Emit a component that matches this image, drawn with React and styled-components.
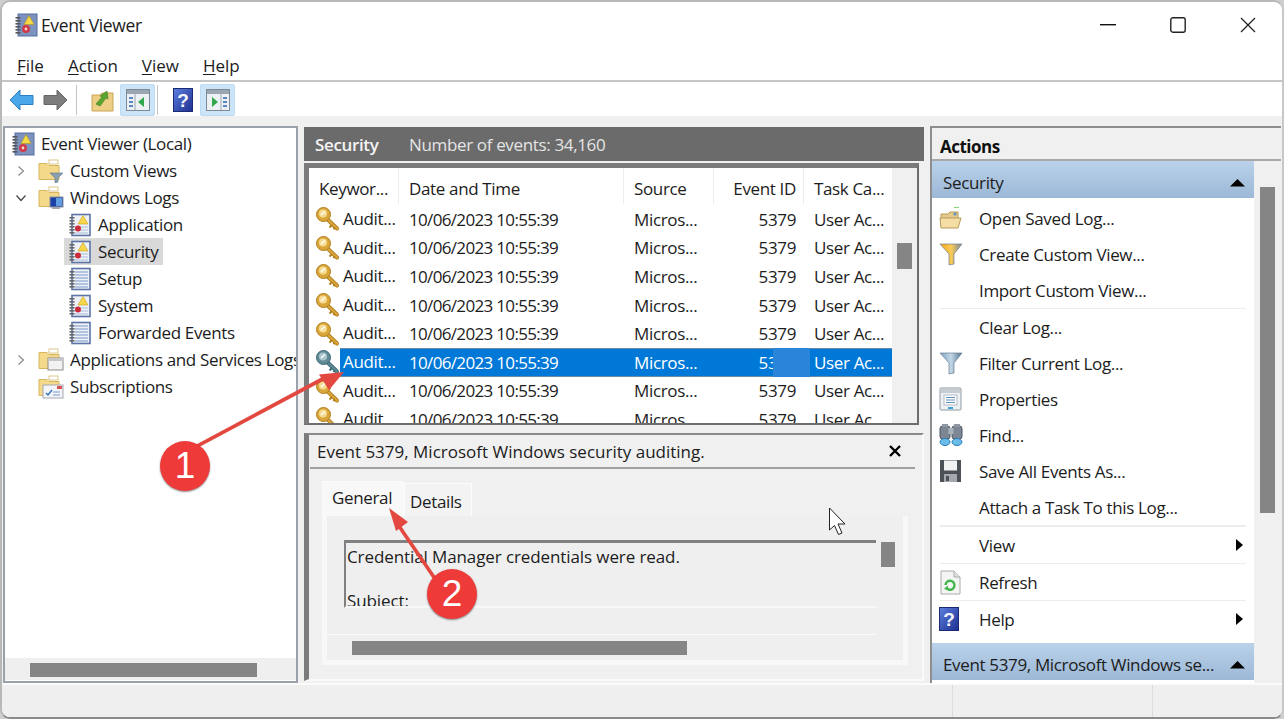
import React from "react";
import styled, { createGlobalStyle } from "styled-components";

const Global = createGlobalStyle`
  html, body { margin: 0; padding: 0; background: #cfcfcf; overflow: hidden; }
  * { box-sizing: border-box; }
`;

const Win = styled.div`
  position: relative; width: 1284px; height: 719px; overflow: hidden;
  display: flex; flex-direction: column;
  background: #fff; border: 2px solid #b8b8b8; border-bottom-color: #8a8a8a; border-right-color: #c8c8c8;
  border-radius: 10px; margin: 0;
  font-family: "Open Sans", "Noto Sans", sans-serif; font-size: 17px; color: #1c1c1c;
  letter-spacing: -0.35px;
`;
const TitleBar = styled.div`display: flex; align-items: center; height: 46px; padding-left: 12px; flex: none;`;
const Title = styled.div`margin-left: 3px; font-size: 17.5px;`;
const Caption = styled.div`margin-left: auto; display: flex; align-items: center; margin-right: 26px; gap: 54px;`;
const MenuBar = styled.div`display: flex; height: 34px; flex: none; align-items: center; padding: 2px 0 0 15px; gap: 24px; border-bottom: 2px solid #c6c6c6;`;
const Menu = styled.span`font-size: 17px; letter-spacing: 0; u { text-underline-offset: 2px; text-decoration-thickness: 1px; }`;
const ToolBar = styled.div`display: flex; height: 34px; flex: none; align-items: flex-end; padding-left: 6px;`;
const ToolBtn = styled.div`
  width: ${p => p.$w || 34}px; height: 32px; display: flex; align-items: center; justify-content: center; flex: none;
  background: ${p => p.$on ? "#cce4f7" : "transparent"}; border-radius: 2px; border: 1px solid ${p => p.$on ? "#bcdcf4" : "transparent"};
`;
const ToolSep = styled.div`width: 1px; height: 30px; background: #c4c4c4; flex: none; margin: 0 ${p => p.$r}px 1px ${p => p.$l}px;`;

const Main = styled.div`flex: 1; min-height: 0; background: #f0f0f0; display: flex; padding-top: 10px;`;

const Tree = styled.div`
  width: 295px; margin-left: 1px; height: 557px; background: #fff; border: 2px solid #9ba1ab; flex: none;
  display: flex; flex-direction: column; padding-top: 2px; overflow: hidden;
`;
const TreeList = styled.div`flex: 1; min-height: 0; overflow: hidden;`;
const TreeRow = styled.div`
  height: 27px; display: flex; align-items: center; padding-left: ${p => p.$indent}px; white-space: nowrap; overflow: hidden;
`;
const Chevron = styled.svg`width: 12px; height: 12px; flex: none; margin-right: 11px;`;
const ChevronGap = styled.span`width: 23px; flex: none;`;
const TreeLabel = styled.span`
  margin-left: 3px; padding: 0 ${p => p.$sel ? 5 : 3}px 0 3px; line-height: 27px; height: 27px;
  background: ${p => p.$sel ? "#d9d9d9" : "transparent"};
`;
const TreeIconWrap = styled.span`
  display: inline-flex; align-items: center; height: 27px; flex: none; padding: 0 ${p => p.$sel ? 3 : 0}px 0 ${p => p.$sel ? 4 : 0}px; margin: 0 ${p => p.$sel ? -3 : 0}px 0 ${p => p.$sel ? -4 : 0}px;
  background: ${p => p.$sel ? "#d9d9d9" : "transparent"};
`;
const HTrack = styled.div`height: 23px; flex: none; background: #efefef; padding: 5px 0 4px ${p => p.$left}px; border-bottom: 1px solid #fff;`;
const HThumb = styled.div`height: 14px; width: ${p => p.$w}px; background: #858585;`;

const Center = styled.div`width: 620px; margin-left: 6px; flex: none; display: flex; flex-direction: column; height: 555px;`;
const CenterHead = styled.div`
  height: 34px; flex: none; background: #6b6b6b; color: #fff; display: flex; align-items: center; padding-left: 11px; margin-top: 1px;
`;
const HeadStrong = styled.b`font-weight: 600; width: 94px; color: #f4f4f4;`;
const HeadInfo = styled.span`color: #e4e4e4;`;
const ListFrame = styled.div`
  margin-top: 2px; width: 615px; height: 262px; flex: none; background: #fff; position: relative;
  border-left: 5px solid #7b7b7b; border-top: 5px solid #7b7b7b; border-right: 2px solid #6d6d6d; border-bottom: 2px solid #6d6d6d;
  display: flex; overflow: hidden;
`;
const ListBody = styled.div`width: 583px; flex: none; overflow: hidden;`;
const VTrack = styled.div`flex: 1; background: #f0f0f0; padding: ${p => p.$top}px 0 0 ${p => p.$left}px;`;
const VThumb = styled.div`width: ${p => p.$w}px; height: ${p => p.$h}px; background: #858585;`;
const HeaderRow = styled.div`display: flex; height: 37px; align-items: flex-start;`;
const ColH = styled.div`
  width: ${p => p.$w}px; flex: none; height: 36px; line-height: 42px; padding: 0 ${p => p.$right ? 7 : 9}px 0 10px; white-space: nowrap;
  border-right: 1px solid ${p => p.$last ? "transparent" : "#ececec"};
  text-align: ${p => p.$right ? "right" : "left"};
`;
const Row = styled.div`display: flex; height: 28.6px; align-items: center; position: relative; color: ${p => p.$sel ? "#fff" : "inherit"};`;
const KeyCell = styled.div`width: 90px; flex: none; display: flex; align-items: center; padding-left: 6px; white-space: nowrap;`;
const KeyText = styled.span`padding-left: 1px; flex: 1; line-height: 28.6px;`;
const KeySvg = styled.svg`flex: none;`;
const Cell = styled.div`
  width: ${p => p.$w}px; flex: none; padding: 0 ${p => p.$right ? 8 : 9}px 0 10px; white-space: nowrap;
  text-align: ${p => p.$right ? "right" : "left"}; letter-spacing: ${p => p.$tight ? "-0.67px" : "inherit"};
`;
const SelBg = styled.div`position: absolute; left: 31px; right: 0; top: 0; bottom: 0; background: #0078d7; border-top: 1px solid #6b8aa8; border-bottom: 1px solid #6b8aa8;`;
const SelPatch = styled.div`position: absolute; left: 464px; width: 37px; top: 0; bottom: 0; background: #2a84d8; z-index: 1;`;
const RowContent = styled.div`display: flex; align-items: center; position: relative;`;

const Splitter = styled.div`height: 8px; flex: none;`;
const Detail = styled.div`
  flex: 1; min-height: 0; width: 620px; border-left: 5px solid #7b7b7b; border-top: 2px solid #8a8a8a; border-right: 2px solid #fafafa; border-bottom: 2px solid #fafafa;
  background: #f0f0f0; padding-left: 1px; display: flex; flex-direction: column;
`;
const DetailHead = styled.div`
  height: 34px; flex: none; width: 605px; border-bottom: 2px solid #a0a0a0; display: flex; align-items: center; padding: 0 14px 0 7px; justify-content: space-between; letter-spacing: 0;
`;
const Tabs = styled.div`display: flex; align-items: flex-end; height: 47px; padding-left: 12px; flex: none;`;
const Tab = styled.div`
  height: ${p => p.$on ? 35 : 33}px; padding-left: ${p => p.$pad}px; line-height: ${p => p.$on ? 32 : 36}px; flex: none;
  width: ${p => p.$w}px; background: ${p => p.$on ? "#f8f8f8" : "#f3f3f3"}; border: 1px solid #fbfbfb; border-bottom: none;
`;
const Pane = styled.div`
  width: 586px; margin-left: 12px; height: 149px; flex: none; background: #f8f8f8; padding: 0 5px 5px 5px;
`;
const PaneIn = styled.div`background: #efefef; height: 144px; display: flex; flex-direction: column; padding-top: 24px;`;
const PaneTop = styled.div`display: flex; height: 95px; flex: none; border-bottom: 1px solid #fafafa; padding-left: 17px; width: 549px;`;
const Box = styled.div`
  width: 532px; height: 68px; flex: none; border-top: 3px solid #808080; border-left: 2px solid #808080; border-bottom: 2px solid #f8f8f8; overflow: hidden;
  padding-left: 1px; letter-spacing: -0.1px; white-space: nowrap;
`;
const BoxLine = styled.div`line-height: 28px; margin-top: ${p => p.$mt || 0}px;`;
const PaneV = styled.div`width: 20px; flex: none; margin-left: 5px; padding-top: 2px;`;
const PaneH = styled.div`padding: 6px 0 0 25px;`;

const Actions = styled.div`width: 351px; margin-left: 6px; flex: none; height: 557px; background: #f0f0f0; display: flex; flex-direction: column; border-left: 2px solid #8e8e8e; border-top: 2px solid #8e8e8e;`;
const ActionsHead = styled.div`
  height: 33px; flex: none; font-weight: 700; display: flex; align-items: center; padding: 6px 0 0 8px; border-bottom: 2px solid #a8a8a8; color: #111; letter-spacing: -0.5px;
`;
const ActionsBody = styled.div`flex: 1; min-height: 0; display: flex;`;
const ActionList = styled.div`width: 322px; flex: none; background: #fff; display: flex; flex-direction: column; overflow: hidden;`;
const ActionBar = styled.div`
  height: 37px; flex: none; display: flex; align-items: center; justify-content: space-between;
  padding: 6px 9px 0 11px; background: linear-gradient(#bad2ea, #9cb8d6); white-space: nowrap;
`;
const Tri = styled.svg`width: 15px; height: 9px; flex: none;`;
const Item = styled.div`
  height: 36px; flex: none; display: flex; align-items: center; position: relative; padding-left: 7px; white-space: nowrap;
`;
const ItemIcon = styled.span`width: 40px; flex: none; display: inline-flex; align-items: center;`;
const Sub = styled.svg`position: absolute; right: 10px; top: 11px; width: 9px; height: 14px;`;
const Sep = styled.div`height: ${p => p.$h || 1}px; flex: none; background: #ececec; margin: 0 8px;`;
const Spacer = styled.div`height: ${p => p.$h}px; flex: none;`;

const Status = styled.div`height: 34px; flex: none; background: #efefef; display: flex; border-top: 2px solid #fbfbfb;`;
const StatusCell = styled.div`width: ${p => p.$w}px; flex: none; border-right: 1px solid #dcdcdc;`;

const Overlay = styled.svg`position: absolute; left: -2px; top: -2px; width: 1284px; height: 719px; pointer-events: none; z-index: 5;`;
const Badge = styled.div`
  position: absolute; left: ${p => p.$x - 27}px; top: ${p => p.$y - 27}px; width: 50px; height: 50px; border-radius: 50%; z-index: 6;
  background: #ef3a3a; color: #fff; display: flex; align-items: center; justify-content: center;
  font-family: "Liberation Sans", sans-serif; font-size: 37px; letter-spacing: 0; box-shadow: 0 1px 2px rgba(0,0,0,.45);
`;

const LogIcon = ({ warn, s = 24 }) => (
  <svg width={s} height={s} viewBox="0 0 24 24">
    <rect x="4" y="1.5" width="18" height="21" fill="#eef2f8" stroke="#5c74a8" strokeWidth="1.6" />
    {[4, 7, 10, 13, 16, 19].map(y => <rect key={y} x="1.5" y={y} width="5" height="1.6" fill="#666" />)}
    {warn ? (
      <>
        {[14, 17, 20].map(y => <line key={y} x1="7" x2="20" y1={y} y2={y} stroke="#a9bbd8" strokeWidth="1" />)}
        <path d="M15 2.5l5 8.5h-10z" fill="#f7d84a" stroke="#c89a18" strokeWidth=".6" />
        <circle cx="10" cy="15.5" r="3" fill="#cc2b3b" />
      </>
    ) : (
      [5, 8, 11, 14, 17, 20].map(y => <line key={y} x1="7" x2="20" y1={y} y2={y} stroke="#8aa5cf" strokeWidth="1.2" />)
    )}
  </svg>
);
const RootIcon = () => (
  <svg width="24" height="24" viewBox="0 0 24 24">
    <rect x="4" y="1" width="19" height="22" fill="#7d93bf" stroke="#566d9f" strokeWidth="1" />
    {[4, 7, 10, 13, 16, 19].map(y => <rect key={y} x="1.5" y={y} width="5" height="1.6" fill="#555" />)}
    <path d="M15 2.5l5 9h-10z" fill="#f6d947" stroke="#b8901a" strokeWidth=".6" />
    <circle cx="12" cy="16" r="4" fill="#d03a48" />
    <circle cx="12" cy="16" r="1.4" fill="#f3d8d8" />
  </svg>
);
const Folder = ({ children }) => (
  <svg width="26" height="24" viewBox="0 0 26 24">
    <path d="M1 4.5h8l2 2h10v14h-20z" fill="#f5d98b" stroke="#d7b55f" strokeWidth="1" />
    <rect x="11" y="1" width="9" height="4" fill="#fff" stroke="#d4b96a" strokeWidth=".8" />
    {children}
  </svg>
);
const KeyIcon = ({ blue }) => {
  const c = blue ? "#5f8a96" : "#d9a63a";
  const d = blue ? "#3f6a78" : "#b37f1f";
  return (
    <KeySvg width="27" height="26" viewBox="0 0 27 26">
      <path d="M10 11l12 11.5" stroke={d} strokeWidth="4" strokeLinecap="round" />
      <path d="M10 11l12 11.5" stroke={c} strokeWidth="2.2" strokeLinecap="round" />
      <path d="M17 19l-2.5 2.5M20 21.5l-1.6 1.6" stroke={d} strokeWidth="2" />
      <circle cx="8.5" cy="8.5" r="7" fill={c} stroke={d} strokeWidth="1" />
      <circle cx="8" cy="7.5" r="4" fill={blue ? "#a9c5cc" : "#f6dc92"} />
      <path d="M6 9l4-3.5" stroke="#fff" strokeWidth="1.4" />
    </KeySvg>
  );
};
const HelpIcon = ({ s = 20 }) => (
  <svg width={s} height={s + 4} viewBox="0 0 20 24">
    <defs><linearGradient id="hg" x1="0" y1="0" x2="1" y2="1"><stop offset="0" stopColor="#5d7fe0" /><stop offset="1" stopColor="#1d2f8f" /></linearGradient></defs>
    <rect x=".5" y=".5" width="19" height="23" fill="url(#hg)" stroke="#1a2a72" />
    <text x="10" y="18.5" textAnchor="middle" fontFamily="Liberation Sans, sans-serif" fontWeight="700" fontSize="19" fill="#f4f6ff">?</text>
  </svg>
);
const PaneIcon = ({ right }) => (
  <svg width="24" height="22" viewBox="0 0 24 22">
    <rect x=".5" y=".5" width="23" height="21" fill="#eef1f4" stroke="#7d8a96" />
    <rect x="1" y="1" width="22" height="4" fill="#9aa7b3" />
    <rect x={right ? 17 : 3} y="8" width="4" height="2" fill="#5b86c4" /><rect x={right ? 17 : 3} y="12" width="4" height="2" fill="#5b86c4" /><rect x={right ? 17 : 3} y="16" width="4" height="2" fill="#5b86c4" />
    <line x1={right ? 15 : 9} x2={right ? 15 : 9} y1="5" y2="21" stroke="#9aa7b3" />
    <path d={right ? "M6 8l6 5-6 5z" : "M18 8l-6 5 6 5z"} fill="#2fa84a" />
  </svg>
);
const Arrow = ({ dir, color, stroke }) => (
  <svg width="25" height="22" viewBox="0 0 25 22">
    <path d={dir === "l" ? "M1 11L11 1v5.5h13v9H11V21z" : "M24 11L14 1v5.5H1v9h13V21z"} fill={color} stroke={stroke} strokeWidth="1" strokeLinejoin="round" />
  </svg>
);
const UpFolder = () => (
  <svg width="23" height="23" viewBox="0 0 23 23">
    <path d="M1 6h8l2-2h11v18H1z" fill="#eccf85" stroke="#c9a655" />
    <path d="M5 15l6-7-2-1 7-5 1 8-2-1-6 8z" fill="#58a62f" stroke="#3d7c1c" strokeWidth=".6" />
  </svg>
);
const Funnel = ({ hot }) => (
  <svg width="24" height="24" viewBox="0 0 24 24">
    <defs><linearGradient id={hot ? "fh" : "fc"} x1="0" x2="1"><stop offset="0" stopColor={hot ? "#f6a416" : "#7da3c4"} /><stop offset=".5" stopColor={hot ? "#fbcb57" : "#c4d8e6"} /><stop offset="1" stopColor={hot ? "#7b8a96" : "#53738f"} /></linearGradient></defs>
    <path d="M1 2h22L15 12v10l-5 1V12z" fill={`url(#${hot ? "fh" : "fc"})`} stroke="#6d8092" strokeWidth=".7" />
  </svg>
);
const ActionIcon = ({ k }) => {
  if (k === "open") return <svg width="23" height="23" viewBox="0 0 23 23"><path d="M2 7h7l2-2h8v13H2z" fill="#e5c98a" stroke="#b99a5b" /><path d="M1 11h21l-3 10H2z" fill="#f4dea4" stroke="#b99a5b" /><rect x="15" y="0" width="5" height="1" fill="#7fd67f" /><circle cx="16" cy="7" r="1.6" fill="#5c94c9" /></svg>;
  if (k === "custom") return <Funnel hot />;
  if (k === "filter") return <Funnel />;
  if (k === "props") return <svg width="23" height="24" viewBox="0 0 23 24"><rect x="1" y="1" width="21" height="22" rx="1" fill="#eef1f3" stroke="#8f9aa3" /><rect x="2" y="2" width="19" height="4" fill="#c6ced4" /><rect x="5" y="8" width="13" height="10" fill="#fff" stroke="#b2bcc4" /><path d="M7 10.5h9M7 13h9M7 15.5h9" stroke="#5f8fbd" /><rect x="9" y="20" width="5" height="2" fill="#3aa3dc" /></svg>;
  if (k === "find") return <svg width="24" height="24" viewBox="0 0 24 24"><rect x="1" y="3" width="10" height="13" rx="2.5" fill="#7d8794" stroke="#4c5560" /><rect x="13" y="3" width="10" height="13" rx="2.5" fill="#7d8794" stroke="#4c5560" /><rect x="9.5" y="5" width="5" height="6" fill="#aab2bb" /><rect x="3" y="1" width="6" height="3" fill="#9099a3" /><rect x="15" y="1" width="6" height="3" fill="#9099a3" /><ellipse cx="6" cy="19" rx="5" ry="3.5" fill="#6bbbe9" stroke="#2a7fb8" /><ellipse cx="18" cy="19" rx="5" ry="3.5" fill="#6bbbe9" stroke="#2a7fb8" /></svg>;
  if (k === "save") return <svg width="23" height="24" viewBox="0 0 23 24"><path d="M1 1h21v22H1z" fill="#4c5158" /><rect x="5" y="1.5" width="13" height="10" fill="#f1f2f3" /><rect x="5" y="15" width="13" height="8" fill="#a5a9ae" /><rect x="7" y="17" width="3" height="5" fill="#4c5158" /></svg>;
  if (k === "refresh") return <svg width="22" height="25" viewBox="0 0 22 25"><path d="M2 1h13l6 6v17H2z" fill="#f4f5f3" stroke="#a8acab" /><path d="M15 1v6h6" fill="#dfe1df" stroke="#a8acab" /><path d="M6.5 15a4.5 4.5 0 1 1 2 4" fill="none" stroke="#3fb54a" strokeWidth="2.4" /><path d="M5 19l5 1.5-1.5-5z" fill="#3fb54a" /></svg>;
  if (k === "help") return <HelpIcon s={20} />;
  return null;
};
const SubArrow = () => <Sub viewBox="0 0 9 14"><path d="M1 1l7 6-7 6z" fill="#000" /></Sub>;
const UpTri = () => <Tri viewBox="0 0 15 9"><path d="M7.5 1L15 8.5H0z" fill="#000" /></Tri>;

const treeItems = [
  { indent: 6, label: "Event Viewer (Local)", root: true },
  { indent: 10, label: "Custom Views", chev: "r", folder: "filter" },
  { indent: 10, label: "Windows Logs", chev: "d", folder: "win" },
  { indent: 63, label: "Application", log: true },
  { indent: 63, label: "Security", log: true, sel: true },
  { indent: 63, label: "Setup", plain: true },
  { indent: 63, label: "System", log: true },
  { indent: 63, label: "Forwarded Events", plain: true },
  { indent: 10, label: "Applications and Services Logs", chev: "r", folder: "app" },
  { indent: 10, label: "Subscriptions", folder: "sub" },
];
const folderBadge = {
  filter: <path d="M12 14h13l-5 5v4l-3 1v-5z" fill="#8aa0b0" stroke="#5f7586" strokeWidth=".6" />,
  win: <g><rect x="12" y="11" width="13" height="10" fill="#1c3fa8" stroke="#8b93a0" /><rect x="18" y="12" width="6" height="8" fill="#5f9ce0" /><rect x="14" y="21" width="8" height="2" fill="#a4a8ae" /></g>,
  app: <g><rect x="10" y="10" width="15" height="12" fill="#f2f2f2" stroke="#8c8c8c" /><rect x="10" y="10" width="15" height="3" fill="#c6c6c6" /></g>,
  sub: <g><rect x="5" y="10" width="20" height="13" fill="#f3f4f7" stroke="#a3a8b3" /><path d="M8 18l2 2 4-5" stroke="#2f6fc4" strokeWidth="1.4" fill="none" /><rect x="19" y="11" width="5" height="3" fill="#d9534f" /><path d="M15 17h7M15 20h7" stroke="#7a9bcf" /></g>,
};

const rows = [0, 1, 2, 3, 4, 5, 6, 7];

export default function App() {
  return (
    <>
      <Global />
      <Win>
        <TitleBar>
          <RootIcon />
          <Title>Event Viewer</Title>
          <Caption>
            <svg width="16" height="2"><rect width="16" height="1.4" fill="#111" /></svg>
            <svg width="16" height="16" viewBox="0 0 16 16"><rect x=".8" y=".8" width="14.4" height="14.4" rx="2" fill="none" stroke="#222" strokeWidth="1.4" /></svg>
            <svg width="16" height="16" viewBox="0 0 16 16"><path d="M1 1l14 14M15 1L1 15" stroke="#222" strokeWidth="1.3" /></svg>
          </Caption>
        </TitleBar>
        <MenuBar>
          <Menu><u>F</u>ile</Menu>
          <Menu><u>A</u>ction</Menu>
          <Menu><u>V</u>iew</Menu>
          <Menu><u>H</u>elp</Menu>
        </MenuBar>
        <ToolBar>
          <ToolBtn $w={27}><Arrow dir="l" color="#4aa8ea" stroke="#2b7fc0" /></ToolBtn>
          <ToolBtn $w={41}><Arrow dir="r" color="#7d7d7d" stroke="#666" /></ToolBtn>
          <ToolSep $l={0} $r={7} />
          <ToolBtn $w={36}><UpFolder /></ToolBtn>
          <ToolBtn $w={35} $on><PaneIcon /></ToolBtn>
          <ToolSep $l={2} $r={7} />
          <ToolBtn $w={35}><HelpIcon s={20} /></ToolBtn>
          <ToolBtn $w={35} $on><PaneIcon right /></ToolBtn>
        </ToolBar>
        <Main>
          <Tree>
            <TreeList>
              {treeItems.map(t => (
                <TreeRow key={t.label} $indent={t.indent}>
                  {t.chev === "r" && <Chevron viewBox="0 0 12 12"><path d="M3.5 1.5l5 4.5-5 4.5" fill="none" stroke="#8a8a8a" strokeWidth="1.2" /></Chevron>}
                  {t.chev === "d" && <Chevron viewBox="0 0 12 12"><path d="M1.5 3.5l4.5 5 4.5-5" fill="none" stroke="#444" strokeWidth="1.2" /></Chevron>}
                  {t.folder && !t.chev && <ChevronGap />}
                  <TreeIconWrap $sel={t.sel}>
                    {t.root && <RootIcon />}
                    {t.folder && <Folder>{folderBadge[t.folder]}</Folder>}
                    {t.log && <LogIcon warn />}
                    {t.plain && <LogIcon />}
                  </TreeIconWrap>
                  <TreeLabel $sel={t.sel}>{t.label}</TreeLabel>
                </TreeRow>
              ))}
            </TreeList>
            <HTrack $left={25}><HThumb $w={227} /></HTrack>
          </Tree>
          <Center>
            <CenterHead>
              <HeadStrong>Security</HeadStrong>
              <HeadInfo>Number of events: 34,160</HeadInfo>
            </CenterHead>
            <ListFrame>
              <ListBody>
                <HeaderRow>
                  <ColH $w={90}>Keywor...</ColH>
                  <ColH $w={225}>Date and Time</ColH>
                  <ColH $w={90}>Source</ColH>
                  <ColH $w={90} $right>Event ID</ColH>
                  <ColH $w={88} $last>Task Ca...</ColH>
                </HeaderRow>
                {rows.map(i => (
                  <Row key={i} $sel={i === 5}>
                    {i === 5 && <SelBg />}
                    <RowContent>
                      <KeyCell><KeyIcon blue={i === 5} /><KeyText>Audit...</KeyText></KeyCell>
                      <Cell $w={225} $tight>10/06/2023 10:55:39</Cell>
                      <Cell $w={90}>Micros...</Cell>
                      <Cell $w={90} $right>5379</Cell>
                      <Cell $w={88}>User Ac...</Cell>
                    </RowContent>
                    {i === 5 && <SelPatch />}
                  </Row>
                ))}
              </ListBody>
              <VTrack $top={75} $left={5}><VThumb $w={15} $h={26} /></VTrack>
            </ListFrame>
            <Splitter />
            <Detail>
              <DetailHead>
                <span>Event 5379, Microsoft Windows security auditing.</span>
                <svg width="12" height="12" viewBox="0 0 12 12"><path d="M1 1l10 10M11 1L1 11" stroke="#000" strokeWidth="2.4" /></svg>
              </DetailHead>
              <Tabs>
                <Tab $on $w={82} $pad={9}>General</Tab>
                <Tab $w={68} $pad={5}>Details</Tab>
              </Tabs>
              <Pane>
                <PaneIn>
                  <PaneTop>
                    <Box>
                      <BoxLine>Credential Manager credentials were read.</BoxLine>
                      <BoxLine $mt={16}>Subject:</BoxLine>
                    </Box>
                    <PaneV><VThumb $w={14} $h={25} /></PaneV>
                  </PaneTop>
                  <PaneH><HThumb $w={335} /></PaneH>
                </PaneIn>
              </Pane>
            </Detail>
          </Center>
          <Actions>
            <ActionsHead>Actions</ActionsHead>
            <ActionsBody>
              <ActionList>
                <ActionBar>Security<UpTri /></ActionBar>
                <Spacer $h={2} />
                <Item><ItemIcon><ActionIcon k="open" /></ItemIcon>Open Saved Log...</Item>
                <Item><ItemIcon><ActionIcon k="custom" /></ItemIcon>Create Custom View...</Item>
                <Item><ItemIcon />Import Custom View...</Item>
                <Sep />
                <Item><ItemIcon />Clear Log...</Item>
                <Item><ItemIcon><ActionIcon k="filter" /></ItemIcon>Filter Current Log...</Item>
                <Item><ItemIcon><ActionIcon k="props" /></ItemIcon>Properties</Item>
                <Item><ItemIcon><ActionIcon k="find" /></ItemIcon>Find...</Item>
                <Item><ItemIcon><ActionIcon k="save" /></ItemIcon>Save All Events As...</Item>
                <Item><ItemIcon />Attach a Task To this Log...</Item>
                <Sep $h={2} />
                <Item><ItemIcon />View<SubArrow /></Item>
                <Sep />
                <Item><ItemIcon><ActionIcon k="refresh" /></ItemIcon>Refresh</Item>
                <Sep />
                <Item><ItemIcon><ActionIcon k="help" /></ItemIcon>Help<SubArrow /></Item>
                <Spacer $h={6} />
                <ActionBar>Event 5379, Microsoft Windows se...<UpTri /></ActionBar>
              </ActionList>
              <VTrack $top={26} $left={6}><VThumb $w={15} $h={326} /></VTrack>
            </ActionsBody>
          </Actions>
        </Main>
        <Status>
          <StatusCell $w={951} />
          <StatusCell $w={200} />
        </Status>
        <Overlay viewBox="0 0 1284 719">
          <g fill="#e2483f" stroke="none">
            <path d="M186 450L325 375.5l1.8 3.4L188 453z" />
            <path d="M344 372L319 374.5L329 390z" />
            <path d="M436 577L397 520l-3 2 39 57z" />
            <path d="M389 508L408 522L396 531z" />
          </g>
          <path d="M829.5 508v22l5-4.5 4 9 3.5-1.5-4-9h7z" fill="#fff" stroke="#222" strokeWidth="1" />
        </Overlay>
        <Badge $x={185} $y={466}>1</Badge>
        <Badge $x={452} $y={594}>2</Badge>
      </Win>
    </>
  );
}
